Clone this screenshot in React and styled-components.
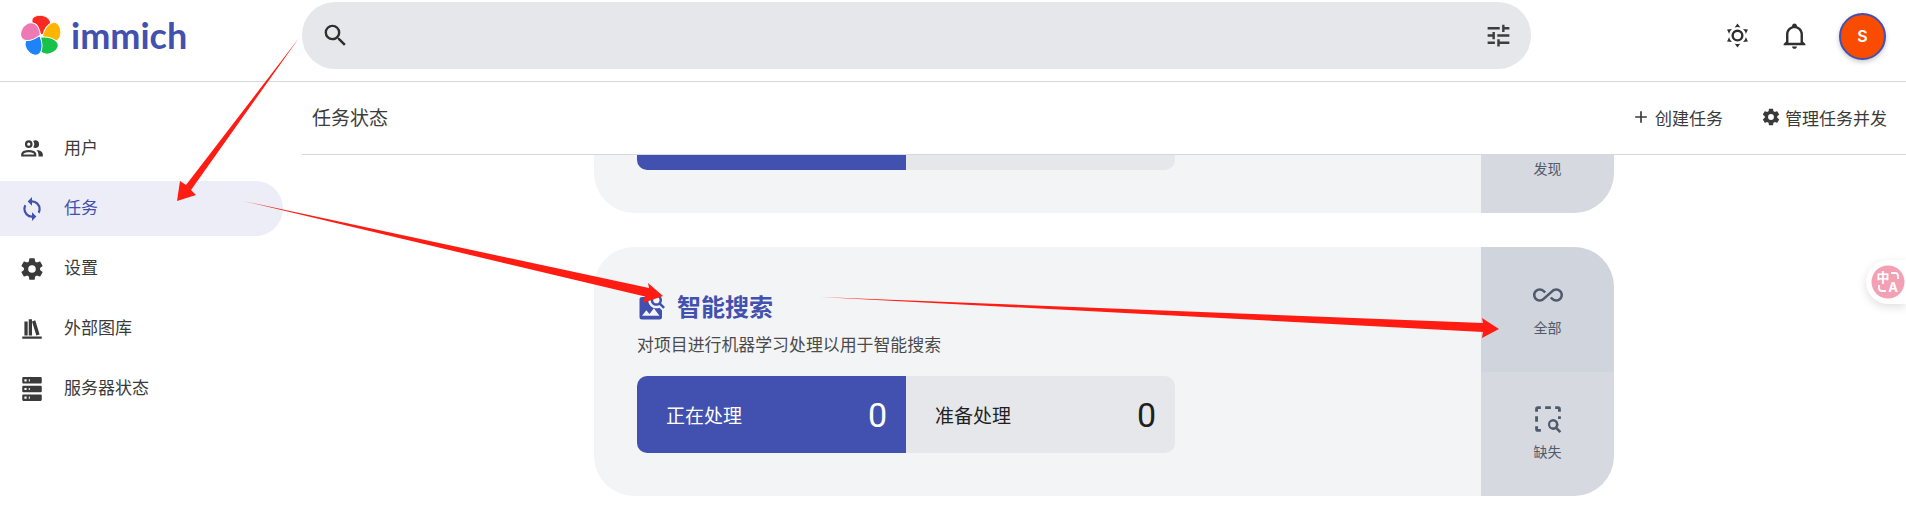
import React from 'react';
import styled, { createGlobalStyle } from 'styled-components';

const P = {
  magnify: 'M9.5,3A6.5,6.5 0 0,1 16,9.5C16,11.11 15.41,12.59 14.44,13.73L14.71,14H15.5L20.5,19L19,20.5L14,15.5V14.71L13.73,14.44C12.59,15.41 11.11,16 9.5,16A6.5,6.5 0 0,1 3,9.5A6.5,6.5 0 0,1 9.5,3M9.5,5C7,5 5,7 5,9.5C5,12 7,14 9.5,14C12,14 14,12 14,9.5C14,7 12,5 9.5,5Z',
  tune: 'M3,17V19H9V17H3M3,5V7H13V5H3M13,21V19H21V17H13V15H11V21H13M7,9V11H3V13H7V15H9V9H7M21,13V11H11V13H21M15,9H17V7H21V5H17V3H15V9Z',
  sun: 'M12,7A5,5 0 0,1 17,12A5,5 0 0,1 12,17A5,5 0 0,1 7,12A5,5 0 0,1 12,7M12,9A3,3 0 0,0 9,12A3,3 0 0,0 12,15A3,3 0 0,0 15,12A3,3 0 0,0 12,9M12,2L14.39,5.42C13.65,5.15 12.84,5 12,5C11.16,5 10.35,5.15 9.61,5.42L12,2M3.34,7L7.5,6.65C6.9,7.16 6.36,7.78 5.94,8.5C5.5,9.24 5.25,10 5.11,10.79L3.34,7M3.36,17L5.12,13.23C5.26,14 5.53,14.78 5.95,15.5C6.37,16.24 6.91,16.86 7.5,17.37L3.36,17M20.65,7L18.88,10.79C18.74,10 18.47,9.23 18.05,8.5C17.63,7.78 17.1,7.15 16.5,6.64L20.65,7M20.64,17L16.5,17.36C17.09,16.85 17.62,16.22 18.04,15.5C18.46,14.77 18.73,14 18.87,13.21L20.64,17M12,22L9.59,18.56C10.33,18.83 11.14,19 12,19C12.82,19 13.63,18.83 14.37,18.56L12,22Z',
  bell: 'M10 21H14C14 22.1 13.1 23 12 23S10 22.1 10 21M21 19V20H3V19L5 17V11C5 7.9 7 5.2 10 4.3V4C10 2.9 10.9 2 12 2S14 2.9 14 4V4.3C17 5.2 19 7.9 19 11V17L21 19M17 11C17 8.2 14.8 6 12 6S7 8.2 7 11V18H17V11Z',
  users: 'M13.07 10.41A5 5 0 0 0 13.07 4.59A3.39 3.39 0 0 1 15 4A3.5 3.5 0 0 1 15 11A3.39 3.39 0 0 1 13.07 10.41M5.5 7.5A3.5 3.5 0 1 1 9 11A3.5 3.5 0 0 1 5.5 7.5M7.5 7.5A1.5 1.5 0 1 0 9 6A1.5 1.5 0 0 0 7.5 7.5M16 17V19H2V17S2 13 9 13 16 17 16 17M14 17C13.86 16.22 12.67 15 9 15S4.07 16.29 4 17M15.95 13A5.32 5.32 0 0 1 18 17V19H22V17S22 13.37 15.94 13Z',
  sync: 'M12,18A6,6 0 0,1 6,12C6,11 6.25,10.03 6.7,9.2L5.24,7.74C4.46,8.97 4,10.43 4,12A8,8 0 0,0 12,20V23L16,19L12,15M12,4V1L8,5L12,9V6A6,6 0 0,1 18,12C18,13 17.75,13.97 17.3,14.8L18.76,16.26C19.54,15.03 20,13.57 20,12A8,8 0 0,0 12,4Z',
  cog: 'M12,15.5A3.5,3.5 0 0,1 8.5,12A3.5,3.5 0 0,1 12,8.5A3.5,3.5 0 0,1 15.5,12A3.5,3.5 0 0,1 12,15.5M19.43,12.97C19.47,12.65 19.5,12.33 19.5,12C19.5,11.67 19.47,11.34 19.43,11L21.54,9.37C21.73,9.22 21.78,8.95 21.66,8.73L19.66,5.27C19.54,5.05 19.27,4.96 19.05,5.05L16.56,6.05C16.04,5.66 15.5,5.32 14.87,5.07L14.5,2.42C14.46,2.18 14.25,2 14,2H10C9.75,2 9.54,2.18 9.5,2.42L9.13,5.07C8.5,5.32 7.96,5.66 7.44,6.05L4.95,5.05C4.73,4.96 4.46,5.05 4.34,5.27L2.34,8.73C2.21,8.95 2.27,9.22 2.46,9.37L4.57,11C4.53,11.34 4.5,11.67 4.5,12C4.5,12.33 4.53,12.65 4.57,12.97L2.46,14.63C2.27,14.78 2.21,15.05 2.34,15.27L4.34,18.73C4.46,18.95 4.73,19.03 4.95,18.95L7.44,17.94C7.96,18.34 8.5,18.68 9.13,18.93L9.5,21.58C9.54,21.82 9.75,22 10,22H14C14.25,22 14.46,21.82 14.5,21.58L14.87,18.93C15.5,18.67 16.04,18.34 16.56,17.94L19.05,18.95C19.27,19.03 19.54,18.95 19.66,18.73L21.66,15.27C21.78,15.05 21.73,14.78 21.54,14.63L19.43,12.97Z',
  books: 'M9 3V18H12V3H9M12 5L16 18L19 17L15 4L12 5M5 5V18H8V5H5M3 19V21H21V19H3Z',
  server: 'M4,1H20A1,1 0 0,1 21,2V6A1,1 0 0,1 20,7H4A1,1 0 0,1 3,6V2A1,1 0 0,1 4,1M4,9H20A1,1 0 0,1 21,10V14A1,1 0 0,1 20,15H4A1,1 0 0,1 3,14V10A1,1 0 0,1 4,9M4,17H20A1,1 0 0,1 21,18V22A1,1 0 0,1 20,23H4A1,1 0 0,1 3,22V18A1,1 0 0,1 4,17M9,5H10V3H9V5M9,13H10V11H9V13M9,21H10V19H9V21M5,3V5H7V3H5M5,11V13H7V11H5M5,19V21H7V19H5Z',
  plus: 'M19,13H13V19H11V13H5V11H11V5H13V11H19V13Z',
  imageSearch: 'M15.5,2C18,2 20,4 20,6.5C20,7.38 19.75,8.21 19.31,8.9L22.39,12L21,13.39L17.88,10.32C17.19,10.75 16.37,11 15.5,11C13,11 11,9 11,6.5C11,4 13,2 15.5,2M15.5,4A2.5,2.5 0 0,0 13,6.5A2.5,2.5 0 0,0 15.5,9A2.5,2.5 0 0,0 18,6.5A2.5,2.5 0 0,0 15.5,4M20 20a2 2 0 0 1-2 2H4a2 2 0 0 1-2-2V6a2 2 0 0 1 2-2h5.5C9.2 4.9 9 5.7 9 6.5 9 10.1 11.9 13 15.5 13c.9 0 1.7-.2 2.4-.5L20 14.6V20ZM7.5 14.5 4 19h14l-4.5-6-3.5 4.5-2.5-3Z',
  infinity: 'M18.6,6.62C17.16,6.62 15.8,7.18 14.83,8.15L7.8,14.39C7.16,15.03 6.31,15.38 5.4,15.38C3.53,15.38 2,13.87 2,12C2,10.13 3.53,8.62 5.4,8.62C6.31,8.62 7.16,8.97 7.84,9.65L8.97,10.65L10.5,9.31L9.22,8.2C8.2,7.18 6.84,6.62 5.4,6.62C2.42,6.62 0,9.04 0,12C0,14.96 2.42,17.38 5.4,17.38C6.84,17.38 8.2,16.82 9.17,15.85L16.2,9.61C16.84,8.97 17.69,8.62 18.6,8.62C20.47,8.62 22,10.13 22,12C22,13.87 20.47,15.38 18.6,15.38C17.7,15.38 16.84,15.03 16.16,14.35L15,13.34L13.5,14.68L14.78,15.8C15.8,16.81 17.15,17.37 18.6,17.37C21.58,17.37 24,14.96 24,12C24,9.04 21.58,6.62 18.6,6.62Z',
  selectSearch: 'M3 5a2 2 0 0 1 2-2h2v2H5v2H3V5ZM10 3h4v2h-4V3ZM17 3h2a2 2 0 0 1 2 2v2h-2V5h-2V3ZM3 10h2v4H3v-4ZM19 10h2v2h-2v-2ZM3 17h2v2h2v2H5a2 2 0 0 1-2-2v-2ZM15.5 12a3.8 3.8 0 0 1 3.2 5.9l2.6 2.6-1.3 1.3-2.6-2.6a3.8 3.8 0 1 1-1.9-7.2Zm0 1.8a2 2 0 1 0 0 4 2 2 0 0 0 0-4Z',
};

const Global = createGlobalStyle`
  html, body { margin: 0; padding: 0; background: #fff; }
  body { font-family: "Noto Sans CJK SC", "Inter", sans-serif; overflow: hidden; }
`;

const Page = styled.div`
  position: relative;
  width: 1906px;
  height: 529px;
  overflow: hidden;
  display: flex;
  flex-direction: column;
`;

const Header = styled.header`
  flex: none;
  height: 81px;
  border-bottom: 1px solid #d6d8de;
  display: flex;
  align-items: flex-start;
`;

const Brand = styled.div`
  width: 302px;
  flex: none;
  display: flex;
  align-items: center;
  gap: 8px;
  padding: 15px 0 0 20px;
  box-sizing: border-box;
`;

const BrandName = styled.span`
  padding-bottom: 2px;
  font-family: "Lato", sans-serif;
  font-weight: 700;
  font-size: 36px;
  line-height: 41px;
  color: #4250af;
`;

const SearchBar = styled.div`
  width: 1229px;
  height: 67px;
  margin-top: 2px;
  flex: none;
  box-sizing: border-box;
  padding: 0 18px 0 19px;
  background: #e5e7eb;
  border-radius: 33px;
  display: flex;
  align-items: center;
  justify-content: space-between;
`;

const HeaderTools = styled.div`
  flex: 1;
  height: 70px;
  display: flex;
  align-items: center;
  justify-content: flex-end;
  gap: 28px;
  padding-right: 20px;
`;

const Icon = styled.svg`
  flex: none;
  display: block;
  fill: currentColor;
`;

const Glyph = ({ d, size = 24, view = '0 0 24 24' }) => (
  <Icon width={size} height={size} viewBox={view} fillRule="evenodd">
    <path d={d} />
  </Icon>
);

const ToolIcon = styled.span`
  display: flex;
  color: ${(p) => p.$color || '#2f2f2f'};
`;

const Avatar = styled.div`
  width: 47px;
  height: 47px;
  margin: 2px 0 0 2px;
  box-sizing: border-box;
  border-radius: 50%;
  border: 2px solid #4250af;
  background: #f94c00;
  color: #fff;
  font-family: "Inter", sans-serif;
  font-size: 16px;
  font-weight: 600;
  display: flex;
  align-items: center;
  justify-content: center;
  box-shadow: 0 2px 5px rgba(0, 0, 0, 0.22);
`;

const Body = styled.div`
  flex: 1;
  min-height: 0;
  display: flex;
`;

const Sidebar = styled.nav`
  width: 302px;
  flex: none;
  box-sizing: border-box;
  padding: 39px 19px 0 0;
  display: flex;
  flex-direction: column;
  gap: 5px;
`;

const NavItem = styled.div`
  height: 55px;
  box-sizing: border-box;
  padding-left: 19px;
  display: flex;
  align-items: center;
  gap: 19px;
  font-size: 17px;
  color: ${(p) => (p.$active ? '#4250af' : '#3a3a3a')};
  background: ${(p) => (p.$active ? '#ecedf7' : 'transparent')};
  border-radius: 0 28px 28px 0;
`;

const NavLabel = styled.span`
  padding-bottom: 4px;
`;

const Main = styled.main`
  flex: 1;
  min-width: 0;
  display: flex;
  flex-direction: column;
`;

const SubHeader = styled.div`
  flex: none;
  height: 73px;
  box-sizing: border-box;
  border-bottom: 1px solid #d6d8de;
  padding: 0 19px 0 10px;
  display: flex;
  align-items: center;
  justify-content: space-between;
`;

const PageTitle = styled.h1`
  margin: 0;
  padding-bottom: 4px;
  font-size: 19px;
  font-weight: 400;
  color: #3c3c3c;
`;

const Actions = styled.div`
  display: flex;
  align-items: center;
  gap: 38px;
  padding-bottom: 2px;
`;

const Action = styled.div`
  display: flex;
  align-items: center;
  gap: 4px;
  font-size: 17px;
  color: #3a3a3a;
`;

const Scroller = styled.div`
  flex: 1;
  min-height: 0;
  overflow: hidden;
  display: flex;
  flex-direction: column;
  justify-content: flex-end;
  align-items: center;
  gap: 34px;
  padding-bottom: 33px;
`;

const Card = styled.section`
  flex: none;
  width: 1020px;
  height: 249px;
  display: flex;
  border-radius: 40px;
  overflow: hidden;
  background: #f3f4f6;
`;

const CardInfo = styled.div`
  flex: 1;
  box-sizing: border-box;
  padding: 0 43px 43px;
  display: flex;
  flex-direction: column;
  justify-content: flex-end;
`;

const CardTitle = styled.h2`
  margin: 0 0 7px;
  height: 36px;
  display: flex;
  align-items: center;
  gap: 10px;
  font-size: 24px;
  font-weight: 700;
  color: #4250af;
`;

const CardTitleText = styled.span`
  padding-bottom: 4px;
`;

const CardDesc = styled.p`
  margin: 0 0 20px;
  font-size: 16.9px;
  line-height: 24px;
  color: #4b4b4b;
`;

const Stats = styled.div`
  width: 538px;
  height: 77px;
  display: grid;
  grid-template-columns: 1fr 1fr;
  border-radius: 10px;
  overflow: hidden;
`;

const Stat = styled.div`
  box-sizing: border-box;
  padding: 0 19px 0 29px;
  display: flex;
  align-items: center;
  justify-content: space-between;
  font-size: 19px;
  background: ${(p) => (p.$primary ? '#4250af' : '#e5e7eb')};
  color: ${(p) => (p.$primary ? '#fff' : '#1f1f1f')};
`;

const StatValue = styled.span`
  font-family: "Roboto", sans-serif;
  font-size: 34px;
  font-weight: 400;
`;

const CardButtons = styled.div`
  width: 133px;
  flex: none;
  display: flex;
  flex-direction: column;
`;

const CardButton = styled.div`
  flex: 1;
  box-sizing: border-box;
  padding-bottom: 4px;
  display: flex;
  flex-direction: column;
  align-items: center;
  justify-content: center;
  gap: 9px;
  font-size: 14px;
  line-height: 16px;
  color: #4f5a6b;
  background: ${(p) => (p.$hover ? '#d0d4dc' : '#d6d9df')};
`;

const Annotations = styled.svg`
  position: absolute;
  left: 0;
  top: 0;
  pointer-events: none;
`;

const TranslateTab = styled.div`
  position: absolute;
  right: 0;
  top: 260px;
  width: 40px;
  height: 44px;
  background: #fff;
  border-radius: 22px 0 0 22px;
  box-shadow: 0 3px 10px rgba(0, 0, 0, 0.13);
  display: flex;
  align-items: center;
  padding-left: 5px;
  box-sizing: border-box;
`;

const Logo = () => (
  <svg width="43" height="43" viewBox="60 44 130 130">
    {[['#fa2921', 0], ['#ffb400', 72], ['#18c249', 144], ['#1e83f7', 216], ['#ed79b5', 288]].map(([c, r]) => (
      <path
        key={c}
        fill={c}
        stroke="#fff"
        strokeWidth="3"
        strokeLinejoin="round"
        transform={`rotate(${r} 124 107)`}
        d="M126 104C108 92 96 78 96 62C96 50 110 44 122 45C140 46 156 58 153 78C151 90 138 98 126 104Z"
      />
    ))}
  </svg>
);

const TranslateBadge = () => (
  <svg width="34" height="34" viewBox="0 0 34 34">
    <circle cx="17" cy="17" r="16.5" fill="#f39fb4" />
    <text x="12" y="17" fontSize="13" fontWeight="700" textAnchor="middle" fill="#fff" fontFamily="Noto Sans CJK SC, sans-serif">中</text>
    <text x="22" y="27" fontSize="13" fontWeight="700" textAnchor="middle" fill="#fff" fontFamily="Inter, sans-serif">A</text>
    <path d="M20 8h4a3 3 0 0 1 3 3v3M8 20v3a3 3 0 0 0 3 3h4" fill="none" stroke="#fff" strokeWidth="1.8" />
  </svg>
);

const navItems = [
  { icon: P.users, label: '用户' },
  { icon: P.sync, label: '任务', active: true },
  { icon: P.cog, label: '设置' },
  { icon: P.books, label: '外部图库' },
  { icon: P.server, label: '服务器状态' },
];

const SELECT_VIEW = '1.5 1.5 21 21';

export default function App() {
  return (
    <Page>
      <Global />
      <Header>
        <Brand>
          <Logo />
          <BrandName>immich</BrandName>
        </Brand>
        <SearchBar>
          <ToolIcon><Glyph d={P.magnify} size={29} /></ToolIcon>
          <ToolIcon $color="#3d3d3d"><Glyph d={P.tune} size={29} /></ToolIcon>
        </SearchBar>
        <HeaderTools>
          <ToolIcon><Glyph d={P.sun} size={29} /></ToolIcon>
          <ToolIcon><Glyph d={P.bell} size={29} /></ToolIcon>
          <Avatar>S</Avatar>
        </HeaderTools>
      </Header>
      <Body>
        <Sidebar>
          {navItems.map((n) => (
            <NavItem key={n.label} $active={n.active}>
              <Glyph d={n.icon} size={26} />
              <NavLabel>{n.label}</NavLabel>
            </NavItem>
          ))}
        </Sidebar>
        <Main>
          <SubHeader>
            <PageTitle>任务状态</PageTitle>
            <Actions>
              <Action><Glyph d={P.plus} size={20} />创建任务</Action>
              <Action><Glyph d={P.cog} size={20} />管理任务并发</Action>
            </Actions>
          </SubHeader>
          <Scroller>
            <Card>
              <CardInfo>
                <Stats>
                  <Stat $primary />
                  <Stat />
                </Stats>
              </CardInfo>
              <CardButtons>
                <CardButton />
                <CardButton>
                  <Glyph d={P.selectSearch} size={30} view={SELECT_VIEW} />
                  发现
                </CardButton>
              </CardButtons>
            </Card>
            <Card>
              <CardInfo>
                <CardTitle>
                  <Glyph d={P.imageSearch} size={30} />
                  <CardTitleText>智能搜索</CardTitleText>
                </CardTitle>
                <CardDesc>对项目进行机器学习处理以用于智能搜索</CardDesc>
                <Stats>
                  <Stat $primary>正在处理<StatValue>0</StatValue></Stat>
                  <Stat>准备处理<StatValue>0</StatValue></Stat>
                </Stats>
              </CardInfo>
              <CardButtons>
                <CardButton $hover>
                  <Glyph d={P.infinity} size={30} />
                  全部
                </CardButton>
                <CardButton>
                  <Glyph d={P.selectSearch} size={30} view={SELECT_VIEW} />
                  缺失
                </CardButton>
              </CardButtons>
            </Card>
          </Scroller>
        </Main>
      </Body>
      <Annotations width="1906" height="529" viewBox="0 0 1906 529">
        <g fill="#ff1c12">
          <polygon points="299,38 191,190 196,195 177,201 180,181 186,185" />
          <polygon points="243,201 649,288 648,283 663,296 643,303 645,296.5" />
          <polygon points="820,297 1483,323 1482,318 1499,329 1482,338 1483,332" />
        </g>
      </Annotations>
      <TranslateTab><TranslateBadge /></TranslateTab>
    </Page>
  );
}
